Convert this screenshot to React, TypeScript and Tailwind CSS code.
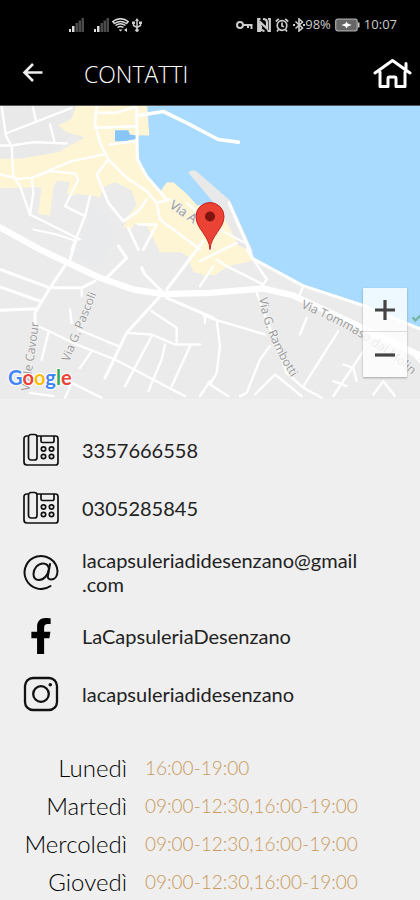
import React from "react";
import { FaFacebookF } from "react-icons/fa";

const contacts = [
  { id: "mobile", label: "3357666558", href: "tel:3357666558", icon: <PhoneIcon /> },
  { id: "landline", label: "0305285845", href: "tel:0305285845", icon: <PhoneIcon /> },
  {
    id: "email",
    label: (
      <>
        lacapsuleriadidesenzano@gmail
        <wbr />
        .com
      </>
    ),
    href: "mailto:lacapsuleriadidesenzano@gmail.com",
    icon: <AtIcon />,
  },
  { id: "facebook", label: "LaCapsuleriaDesenzano", href: "#facebook", icon: <FaFacebookF className="h-9 w-9" /> },
  { id: "instagram", label: "lacapsuleriadidesenzano", href: "#instagram", icon: <InstagramIcon /> },
];

const hours = [
  ["Lunedì", "16:00-19:00"],
  ["Martedì", "09:00-12:30,16:00-19:00"],
  ["Mercoledì", "09:00-12:30,16:00-19:00"],
  ["Giovedì", "09:00-12:30,16:00-19:00"],
];

function PhoneIcon() {
  return (
    <svg viewBox="0 0 36 36" className="h-9 w-9" fill="none" stroke="#111" strokeWidth="1.7" aria-hidden="true">
      <path d="M5 4H3.5A2.5 2.5 0 0 0 1 6.500V30a3 3 0 0 0 3 3h28.500a2.500 2.500 0 0 0 2.500-2.500V6.500A2.500 2.500 0 0 0 32.500 4H14" />
      <rect x="5.500" y="2.500" width="8.500" height="25.500" rx="2.500" />
      <path d="M18 4v5a1.500 1.500 0 0 0 1.500 1.500h10a1.500 1.500 0 0 0 1.500-1.500V4" />
      <circle cx="20.500" cy="17" r="2.200" />
      <circle cx="28.500" cy="17" r="2.200" />
      <circle cx="20.500" cy="24.500" r="2.200" />
      <circle cx="28.500" cy="24.500" r="2.200" />
    </svg>
  );
}

function AtIcon() {
  return (
    <svg viewBox="0 0 36 36" className="h-9 w-9" fill="none" stroke="#111" strokeWidth="2" strokeLinecap="round" aria-hidden="true">
      <path d="M27.500 32A16.500 16.500 0 1 1 34.500 17c0 5-2.500 8.500-6.500 8.500-2.500 0-3.500-1.500-3-4l2-11.500" />
      <path d="M26 15c-.5-3.500-3-5.500-6-5.500-5 0-9.500 5-9.500 10.500 0 4 2.200 6 5.500 6 5 0 9-5 10-11z" />
    </svg>
  );
}

function InstagramIcon() {
  return (
    <svg viewBox="0 0 36 36" className="h-9 w-9" fill="none" stroke="#111" strokeWidth="2.300" aria-hidden="true">
      <rect x="2" y="2" width="32" height="32" rx="8" />
      <circle cx="18" cy="18" r="7.800" />
      <circle cx="27.300" cy="8.800" r="1.800" fill="#111" stroke="none" />
    </svg>
  );
}

function Signal() {
  return (
    <svg viewBox="0 0 15 14" className="h-3.5 w-[15px]" aria-hidden="true">
      <path d="M0 11h2v3H0zM3 8h2.500v6H3z" fill="#ddd" />
      <path d="M6.500 5H9v9H6.500zM9.500 2.500H12V14H9.500zM12.500 0H15v14h-2.500z" fill="#4a4a4a" />
    </svg>
  );
}

function StatusBar() {
  return (
    <div className="flex h-[50px] items-center justify-between pl-[69px] pr-[23px] text-[13px] text-[#ccc]">
      <div className="flex items-center gap-[3px]">
        <Signal />
        <span className="w-1" />
        <Signal />
        <svg viewBox="0 0 17 14" className="h-3.5 w-[17px]" fill="none" stroke="#ddd" strokeWidth="1.500" aria-hidden="true">
          <path d="M.8 3.500Q8.500-2 16.200 3.500L14.500 5.500Q8.500 1.500 2.500 5.500zM3.500 7.500q5-3.500 10 0M5.500 9.500q3-2 6 0" />
          <path d="M6.500 11.500h4L8.500 13.500zM12 12l3-2v4z" fill="#ddd" stroke="none" />
        </svg>
        <svg viewBox="0 0 10 14" className="h-3.5 w-2.5" fill="none" stroke="#ccc" strokeWidth="1.500" aria-hidden="true">
          <path d="M5 2v10M1.500 4.500v3L5 9.500l3.500-2v-3" />
          <path d="M5 0 3 3h4zM0 3.500h3v2.500H0zM7 3.500h3v2.500H7z" fill="#ccc" stroke="none" />
          <circle cx="5" cy="12.300" r="1.700" fill="#ccc" stroke="none" />
        </svg>
      </div>
      <div className="flex items-center gap-1">
        <svg viewBox="0 0 17 14" className="h-3.5 w-[17px]" fill="none" stroke="#ccc" strokeWidth="2" aria-hidden="true">
          <circle cx="4" cy="7" r="3" />
          <path d="M7 7h9.500M15.500 7v4M12 7v3" />
        </svg>
        <svg viewBox="0 0 14 14" className="h-3.5 w-3.5" fill="none" stroke="#ccc" strokeWidth="2.200" aria-hidden="true">
          <path d="M3.500 1H1.200v12H3l.5-8.500L10 10.500V4Q10 2.500 8.500 1.500L6 1" />
          <path d="M10.500 13h2.300V1H11M4 8v3q.5 1.500 3.500 2" />
        </svg>
        <svg viewBox="0 0 14 14" className="h-3.5 w-3.5" fill="none" stroke="#ccc" strokeWidth="1.700" aria-hidden="true">
          <circle cx="7" cy="7.500" r="4.800" />
          <path d="M.8 3.500 3.800.8M13.200 3.500 10.200.8M7 4.500v3.500l2 .8M3.500 11.500 2 13.500M10.500 11.500l1.500 2" />
        </svg>
        <div className="flex items-center">
          <svg viewBox="0 0 12 14" className="h-3.5 w-3" fill="none" stroke="#ccc" strokeWidth="1.600" aria-hidden="true">
            <path d="m2.500 3.500 7 6.500L6 13V1l3.500 3-7 6.500" />
            <path d="M0 7h2M10 7h2" strokeWidth="2" />
          </svg>
          <span>98%</span>
        </div>
        <svg viewBox="0 0 25 14" className="h-3.5 w-[25px]" aria-hidden="true">
          <rect x=".7" y="1.200" width="21.500" height="11.600" rx="2" fill="#666" stroke="#aaa" strokeWidth="1.200" />
          <path d="M23 4.500h1.500v5H23z" fill="#ccc" />
          <path d="m6.500 7 4-1.500 1-2 1.200 2 4 1.500-4 1.500-1.200 2-1-2z" fill="#fff" />
        </svg>
        <span>10:07</span>
      </div>
    </div>
  );
}

function Header() {
  return (
    <header className="shrink-0 border-b border-[#555] bg-black font-['Open_Sans',sans-serif] text-white">
      <StatusBar />
      <div className="flex h-[55px] items-start pl-[22px] pr-2">
        <button type="button" aria-label="Indietro" className="mt-3">
          <svg viewBox="0 0 22 22" className="h-[22px] w-[22px]" fill="none" stroke="#eee" strokeWidth="2.600" aria-hidden="true">
            <path d="M20.500 10.500H3M11 2 2.500 10.500 11 19" />
          </svg>
        </button>
        <h1 className="ml-10 mt-1.5 flex-1 text-[23px] font-light leading-9">CONTATTI</h1>
        <a href="#home" aria-label="Home" className="mt-1.5">
          <svg viewBox="0 0 40 34" className="h-[34px] w-10" fill="none" stroke="#fff" strokeWidth="3" strokeLinejoin="round" strokeLinecap="round" aria-hidden="true">
            <path d="M3 17 20.500 4.500 38 17M8 16v14.500h8v-8a1.500 1.500 0 0 1 1.500-1.500h5a1.500 1.500 0 0 1 1.500 1.500v8H33V16M34 13V7.500" />
          </svg>
        </a>
      </div>
    </header>
  );
}

function MapDrawing() {
  return (
    <svg viewBox="0 0 1260 882" preserveAspectRatio="xMidYMid slice" className="block h-full w-full" role="img" aria-label="Mappa">
      <rect width="1260" height="882" fill="#ebebeb" />
      <path d="M0 0H230V60L180 130 60 170 0 160z" fill="#e9e9e9" />
      {/* built-up areas */}
      <g fill="#fdf5d3">
        <path d="M228 0H440L448 90 412 95 415 165 475 262 500 230 525 232 600 290 700 350 735 415 790 455 740 470 690 480 640 510 580 500 560 440 480 440 440 360 405 355 395 370 370 365 385 330 410 300 395 255 345 230 310 245 300 275 270 270 235 265 220 270 200 265 210 230 170 225 160 245 150 330 115 325 125 245 0 248V160H60L175 140 255 95 200 80 175 60 215 40z" />
        <path d="M530 432H640V490L620 515 580 490 590 470 550 445z" />
      </g>
      <path d="M275 290 330 350 340 400 300 490 220 450 260 370z" fill="#e8eaeb" />
      {/* lake */}
      <path d="M442 0 448 90H412L418 160 440 215 478 262 500 230 520 230 560 265 592 300 660 290 685 285 750 432 760 457 910 537 1090 596 1260 670V0z" fill="#a9daff" />
      <path d="M345 74H385L390 87 410 90V100L375 107H345z" fill="#88c6fa" />
      <path d="M565 202Q575 190 590 198L690 285 760 440 715 420 680 350 640 290z" fill="#e8e9e8" />
      {/* streets */}
      <g fill="none" stroke="#fff" strokeWidth="9" strokeLinecap="round" strokeLinejoin="round">
        <path d="M415 30 490 18 560 52 655 102 715 110" strokeWidth="11" />
        <path d="M1380 720 1090 600 910 541 758 459 748 432 687 292" />
        <g transform="translate(0 -18)">
          <path d="M5 20 18 110 35 140 40 230 60 260 90 345 240 420M18 102 215 25M98 20 108 65M0 138 35 138 100 128 200 132M150 75 163 125" strokeWidth="7" />
          <path d="M0 225 60 238 95 235 215 185 310 165M95 235 150 215 225 222 235 240 195 320 255 350 215 450M270 290 255 350M95 235 100 280 90 345" strokeWidth="7" />
          <path d="M290 20 285 70 300 130 325 180 380 235 440 275 470 310 510 300M325 180 290 225 325 310 370 365M415 375H470L430 450M470 310 480 360 600 450M440 300 415 335 370 365M385 385 415 450M285 85 410 80M330 135 410 125M290 40 350 40 410 20" strokeWidth="8" />
          <path d="M410 20 412 180 440 230 500 300" />
          <path d="M100 390 170 405 230 425M560 310 640 380 735 430" strokeWidth="6" />
        </g>
        <path d="M-20 355 120 432 200 470 300 517 400 552 490 566 630 562 790 549 880 570 1030 640 1280 760" strokeWidth="19" />
        <g transform="translate(0 432)">
          <path d="M200 40 150 115 105 190V225M0 60 150 115 245 115 285 95M0 112 120 155M0 182 110 178M210 30 225-20M320 85 380 25 355-10M425 55 435 75 490 130 380 250 315 385M500 120 610-25M500 145 640 205" />
          <path d="M105 225 230 285 345 330 555 440M235 240 355 290M380 250 455 255 525 285 600 285M455 185 530 235V285M455 260 375 410M495 285 485 330 445 425M570 290 515 410M630 395 600 440M145 250 125 330M275 305 240 355M245 115V140M210 180 215 220M215 400 305 445M215 400 195 445M90 430 160 440M600 110 640 50M615 200V220" strokeWidth="7" />
        </g>
        <g transform="translate(630 432)">
          <path d="M-20 198 20 212 165 255M20 212 30 290 20 370 0 405 55 440M180 290 150 330 110 430 90 440M140 130 230 370 280 415 335 445M280 410 385 245M370 440 460 305M400 345 430 355 440 395M280 110 265 145M290 205 270 255M135 435 195 375 275 440M370 395 410 410M490 435 520 395 555 440M580 280 640 350" strokeWidth="7" />
          <path d="M20 30 50 50 160 105 170 90 110 0M-30 35 80-20" strokeWidth="7" />
        </g>
      </g>
      {/* street names */}
      <g fill="#999" fontSize="36" fontFamily="'Open Sans', sans-serif" stroke="#f4f4f4" strokeWidth="4" paintOrder="stroke">
        <text transform="translate(506 305) rotate(34)" fontSize="39">Via A</text>
        <text transform="translate(207 770) rotate(-68)">Via G. Pascoli</text>
        <text transform="translate(88 858) rotate(-82)">Viale Cavour</text>
        <path id="rambotti" d="M778 578Q790 690 890 840" fill="none" stroke="none" />
        <text fontSize="36"><textPath href="#rambotti">Via G. Rambotti</textPath></text>
        <path id="molin" d="M902 607Q1100 685 1260 830" fill="none" stroke="none" />
        <text><textPath href="#molin">Via Tommaso dal Molin</textPath></text>
      </g>
      <path d="m1238 635 8 10 20-20" fill="none" stroke="#75b79e" strokeWidth="7" />
      {/* marker */}
      <path d="M630 432C628 390 588 370 588 333a42 42 0 0 1 84 0C672 370 632 390 630 432z" fill="#ea4335" stroke="#c5221f" strokeWidth="3" />
      <circle cx="630" cy="333" r="15" fill="#811411" />
    </svg>
  );
}

function MapView() {
  return (
    <section className="relative h-[293px] shrink-0">
      <MapDrawing />
      <a
        href="#google"
        className="absolute bottom-2 left-2 font-['Lato',sans-serif] text-[20px] font-bold leading-7 [-webkit-text-stroke:2px_white] [paint-order:stroke_fill]"
      >
        <span className="text-[#4285f4]">G</span>
        <span className="text-[#ea4335]">o</span>
        <span className="text-[#fbbc05]">o</span>
        <span className="text-[#4285f4]">g</span>
        <span className="text-[#34a853]">l</span>
        <span className="text-[#ea4335]">e</span>
      </a>
      <div className="absolute bottom-[22px] right-[13px] flex w-11 flex-col bg-white/80 shadow-[0_1px_2px_rgba(0,0,0,0.3)]">
        <button type="button" aria-label="Ingrandisci" className="flex h-11 items-center justify-center border-b border-[#ddd]">
          <svg viewBox="0 0 20 20" className="h-5 w-5" stroke="#444" strokeWidth="3.200" aria-hidden="true">
            <path d="M0 10h20M10 0v20" />
          </svg>
        </button>
        <button type="button" aria-label="Riduci" className="flex h-[45px] items-center justify-center">
          <svg viewBox="0 0 20 20" className="h-5 w-5" stroke="#444" strokeWidth="3.200" aria-hidden="true">
            <path d="M0 10h20" />
          </svg>
        </button>
      </div>
    </section>
  );
}

export default function App() {
  return (
    <div className="flex h-screen flex-col bg-[#efefef] font-['Lato',sans-serif] text-[#222]">
      <Header />
      <main className="min-h-0 flex-1 overflow-y-auto [scrollbar-width:none]">
        <MapView />
        <ul className="px-[23px] pt-[22px]">
          {contacts.map((c) => (
            <li key={c.id}>
              <a href={c.href} className="flex items-center gap-[23px] py-[11px] text-[20px] leading-6">
                <span className="shrink-0 text-black">{c.icon}</span>
                <span className="min-w-0">{c.label}</span>
              </a>
            </li>
          ))}
        </ul>
        <table className="mt-[26px] border-collapse">
          <tbody>
            {hours.map(([day, time]) => (
              <tr key={day} className="h-[38px]">
                <th scope="row" className="w-[127px] p-0 text-right text-[24px] font-light leading-8 text-black">
                  {day}
                </th>
                <td className="p-0 pl-[18px] text-[19px] font-light leading-8 text-[#c99a5c]">{time}</td>
              </tr>
            ))}
          </tbody>
        </table>
      </main>
    </div>
  );
}
